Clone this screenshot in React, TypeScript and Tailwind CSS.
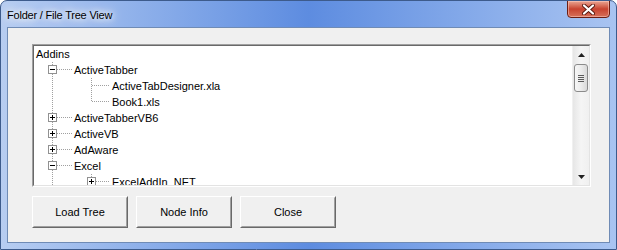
import React from "react";

const LINE = "#a0a0a0";
const BOX = "#919191";

// dotted tree guide helpers
function VLine({ x, y1, y2 }: { x: number; y1: number; y2: number }) {
  return <line x1={x + 0.5} y1={y1} x2={x + 0.5} y2={y2} stroke={LINE} strokeDasharray="1 1" />;
}
function HLine({ x1, x2, y }: { x1: number; x2: number; y: number }) {
  return <line x1={x1} y1={y + 0.5} x2={x2} y2={y + 0.5} stroke={LINE} strokeDasharray="1 1" />;
}
function Toggle({ cx, open }: { cx: number; open: boolean }) {
  // 9x9 box around pixel column cx, row 7
  return (
    <g shapeRendering="crispEdges">
      <rect x={cx - 4 + 0.5} y={3.5} width={8} height={8} fill="#fff" stroke={BOX} />
      <line x1={cx - 2} y1={7.5} x2={cx + 3} y2={7.5} stroke="#000" />
      {!open && <line x1={cx + 0.5} y1={5} x2={cx + 0.5} y2={10} stroke="#000" />}
    </g>
  );
}

type Node = {
  label: string;
  level: 0 | 1 | 2;
  toggle?: "open" | "closed";
  last?: boolean;
};

const nodes: Node[] = [
  { label: "Addins", level: 0 },
  { label: "ActiveTabber", level: 1, toggle: "open" },
  { label: "ActiveTabDesigner.xla", level: 2 },
  { label: "Book1.xls", level: 2, last: true },
  { label: "ActiveTabberVB6", level: 1, toggle: "closed" },
  { label: "ActiveVB", level: 1, toggle: "closed" },
  { label: "AdAware", level: 1, toggle: "closed" },
  { label: "Excel", level: 1, toggle: "open" },
  { label: "ExcelAddIn_NET", level: 2, toggle: "closed" },
];

const C1 = 18;
const C2 = 57;

function TreeRow({ node }: { node: Node }) {
  if (node.level === 0) {
    return (
      <div className="h-4 flex items-center pl-[2px] leading-4">
        <span>{node.label}</span>
      </div>
    );
  }
  const w = node.level === 1 ? 40 : 78;
  const cx = node.level === 1 ? C1 : C2;
  return (
    <div className="h-4 flex items-center leading-4">
      <svg width={w} height={16} className="shrink-0" shapeRendering="crispEdges">
        <VLine x={C1} y1={0} y2={16} />
        {node.level === 2 && <VLine x={C2} y1={0} y2={node.last ? 8 : 16} />}
        <HLine x1={node.toggle ? cx + 5 : cx + 1} x2={w - 2} y={7} />
        {node.toggle && <Toggle cx={cx} open={node.toggle === "open"} />}
      </svg>
      <span className="whitespace-nowrap">{node.label}</span>
    </div>
  );
}

function ScrollBar() {
  return (
    <div className="w-[17px] shrink-0 flex flex-col bg-gradient-to-r from-[#e6e6e6] via-[#f5f5f5] to-[#f0f0f0] border-l border-[#f0f0f0]">
      <div className="h-[17px] flex items-center justify-center">
        <svg width="7" height="4" viewBox="0 0 7 4">
          <path d="M3.5 0 L7 4 L0 4 Z" fill="#222" />
        </svg>
      </div>
      <div className="flex-1 flex flex-col px-px pt-px">
        <div className="h-[28px] rounded-[3px] border border-[#8b8b8b] bg-gradient-to-r from-[#f6f6f6] via-[#ececec] to-[#d9d9d9] flex flex-col items-center justify-center gap-px">
          <div className="w-[6px] h-px bg-[#5a5a5a]" />
          <div className="w-[6px] h-px bg-[#5a5a5a]" />
          <div className="w-[6px] h-px bg-[#5a5a5a]" />
          <div className="w-[6px] h-px bg-[#5a5a5a]" />
        </div>
      </div>
      <div className="h-[17px] flex items-center justify-center">
        <svg width="7" height="4" viewBox="0 0 7 4">
          <path d="M0 0 L7 0 L3.5 4 Z" fill="#222" />
        </svg>
      </div>
    </div>
  );
}

function Btn({ children }: { children: React.ReactNode }) {
  return (
    <button className="w-[96px] h-[32px] bg-[#f0f0f0] border border-t-white border-l-white border-r-[#696969] border-b-[#696969] text-[11px] text-black">
      <div className="h-full w-full border border-transparent border-r-[#a0a0a0] border-b-[#a0a0a0] flex items-center justify-center">
        {children}
      </div>
    </button>
  );
}

export default function App() {
  return (
    <div
      className="w-[617px] h-[250px] flex flex-col rounded-t-[7px] border border-[#3d5b8c] overflow-hidden bg-gradient-to-r from-[#b7cdf1] via-[#5d8ce0] to-[#a9c4f1]"
      style={{ fontFamily: '"Liberation Sans", Arial, sans-serif' }}
    >
      {/* title bar */}
      <div className="h-[26px] shrink-0 flex items-start justify-between pl-[6px] pr-[6px]">
        <span className="mt-[6px] text-[11px] tracking-[-0.2px] text-black [text-shadow:0_0_6px_#ffffff,0_0_10px_#ffffff,0_0_14px_#ffffff]">
          Folder / File Tree View
        </span>
        <div className="w-[43px] h-[18px] -mt-px rounded-b-[4px] border border-[#6b1e14] bg-gradient-to-b from-[#e9a593] via-[#c8422f] to-[#d6705a] flex items-center justify-center shadow-[inset_0_0_0_1px_rgba(255,210,200,0.5)]">
          <svg width="13" height="11" viewBox="0 0 13 11">
            <path d="M2 1.5 L11 9.5 M11 1.5 L2 9.5" stroke="#5a1a10" strokeWidth="4" strokeLinecap="round" />
            <path d="M2 1.5 L11 9.5 M11 1.5 L2 9.5" stroke="#ffffff" strokeWidth="2.2" strokeLinecap="round" />
          </svg>
        </div>
      </div>

      {/* client area */}
      <div className="flex-1 mx-[6px] mb-[6px] border border-[#6f8bb5] bg-[#f0f0f0] pl-[24px] pt-[16px] flex flex-col">
        <div className="w-[559px] h-[143px] border border-t-[#a0a0a0] border-l-[#a0a0a0] border-r-white border-b-white">
          <div className="w-full h-full border border-t-[#696969] border-l-[#696969] border-r-[#e3e3e3] border-b-[#e3e3e3] bg-white flex">
            <div className="flex-1 overflow-hidden text-[11px] text-black">
              {nodes.map((n) => (
                <TreeRow key={n.label} node={n} />
              ))}
            </div>
            <ScrollBar />
          </div>
        </div>
        <div className="flex gap-[8px] mt-[9px]">
          <Btn>Load Tree</Btn>
          <Btn>Node Info</Btn>
          <Btn>Close</Btn>
        </div>
      </div>
    </div>
  );
}
